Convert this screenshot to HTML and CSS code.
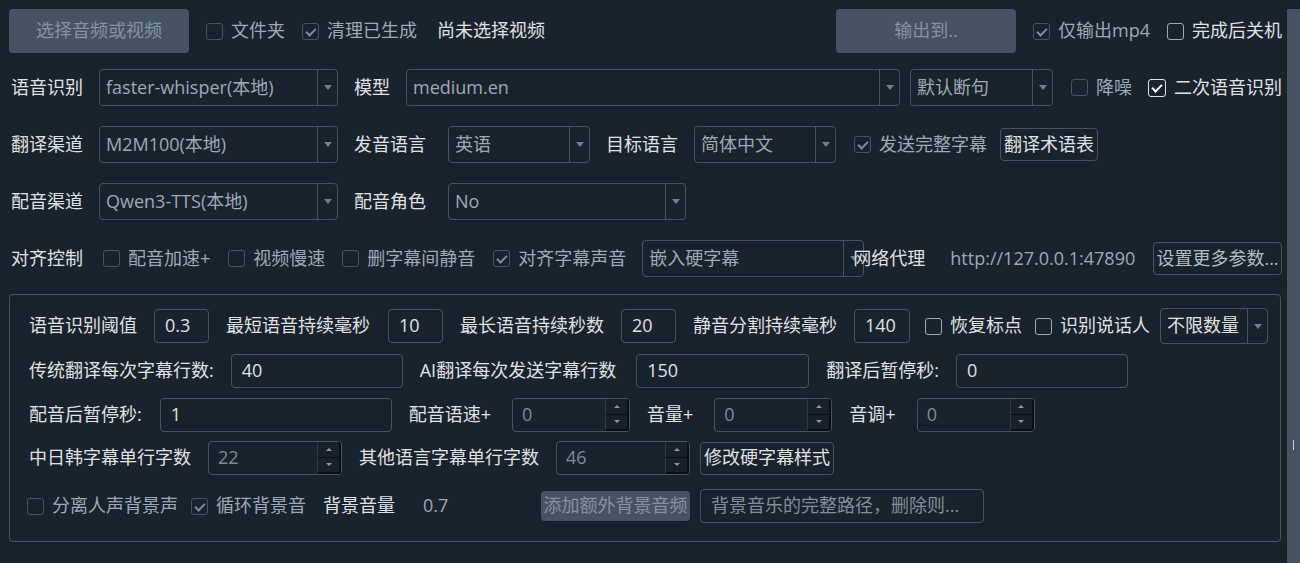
FILE: index.html
```html
<!DOCTYPE html>
<html lang="zh-CN">
<head>
    <meta charset="UTF-8">
    <title>视频翻译</title>
    <link rel="stylesheet" href="styles.css">
</head>
<body>
<div class="window">
    <div class="content">
        <div class="row row-top">
            <div class="btn btn-fill w-180">选择音频或视频</div>
            <label class="cb"><span class="box"></span>文件夹</label>
            <label class="cb"><span class="box checked"></span>清理已生成</label>
            <span class="lbl gap-20">尚未选择视频</span>
            <div class="btn btn-fill w-180 push">输出到..</div>
            <label class="cb"><span class="box checked"></span>仅输出mp4</label>
            <label class="cb on"><span class="box"></span>完成后关机</label>
        </div>

        <div class="row row-form first">
            <span class="lbl">语音识别</span>
            <div class="combo w-239"><span class="val">faster-whisper(本地)</span><span class="arrow"></span></div>
            <span class="lbl">模型</span>
            <div class="combo w-494"><span class="val">medium.en</span><span class="arrow"></span></div>
            <div class="combo w-143 gap-10"><span class="val">默认断句</span><span class="arrow"></span></div>
            <label class="cb gap-18"><span class="box"></span>降噪</label>
            <label class="cb on"><span class="box big checked"></span>二次语音识别</label>
        </div>

        <div class="row row-form">
            <span class="lbl">翻译渠道</span>
            <div class="combo w-239"><span class="val">M2M100(本地)</span><span class="arrow"></span></div>
            <span class="lbl">发音语言</span>
            <div class="combo w-142 gap-22"><span class="val">英语</span><span class="arrow"></span></div>
            <span class="lbl">目标语言</span>
            <div class="combo w-142"><span class="val">简体中文</span><span class="arrow"></span></div>
            <label class="cb gap-18"><span class="box checked"></span>发送完整字幕</label>
            <div class="btn btn-line w-98 gap-13">翻译术语表</div>
        </div>

        <div class="row row-form">
            <span class="lbl">配音渠道</span>
            <div class="combo w-239"><span class="val">Qwen3-TTS(本地)</span><span class="arrow"></span></div>
            <span class="lbl">配音角色</span>
            <div class="combo w-238 gap-22"><span class="val">No</span><span class="arrow"></span></div>
        </div>

        <div class="row row-form">
            <span class="lbl">对齐控制</span>
            <label class="cb gap-20"><span class="box"></span>配音加速+</label>
            <label class="cb gap-18"><span class="box"></span>视频慢速</label>
            <label class="cb gap-17"><span class="box"></span>删字幕间静音</label>
            <label class="cb gap-18"><span class="box checked"></span>对齐字幕声音</label>
            <div class="combo w-222 gap-14"><span class="val">嵌入硬字幕</span><span class="arrow"></span></div>
            <span class="lbl overlap">网络代理</span>
            <span class="muted gap-26">http://127.0.0.1:47890</span>
            <div class="btn btn-line btn-dim w-129 push">设置更多参数...</div>
        </div>

        <div class="group">
            <div class="row row-g1">
                <span class="lbl">语音识别阈值</span>
                <div class="field w-55">0.3</div>
                <span class="lbl">最短语音持续毫秒</span>
                <div class="field w-55 gap-18">10</div>
                <span class="lbl">最长语音持续秒数</span>
                <div class="field w-55">20</div>
                <span class="lbl">静音分割持续毫秒</span>
                <div class="field w-56">140</div>
                <label class="cb on gap-15"><span class="box"></span>恢复标点</label>
                <label class="cb on gap-13"><span class="box"></span>识别说话人</label>
                <div class="combo combo-sm w-108 gap-10"><span class="val bright">不限数量</span><span class="arrow"></span></div>
            </div>

            <div class="row row-g">
                <span class="lbl">传统翻译每次字幕行数:</span>
                <div class="field w-172">40</div>
                <span class="lbl">AI翻译每次发送字幕行数</span>
                <div class="field w-173 gap-20">150</div>
                <span class="lbl">翻译后暂停秒:</span>
                <div class="field w-172">0</div>
            </div>

            <div class="row row-g">
                <span class="lbl">配音后暂停秒:</span>
                <div class="field w-232 gap-18">1</div>
                <span class="lbl">配音语速+</span>
                <div class="spin w-118 gap-22"><span class="val">0</span><span class="steps"><i class="up"></i><i class="down"></i></span></div>
                <span class="lbl">音量+</span>
                <div class="spin w-118 gap-22"><span class="val">0</span><span class="steps"><i class="up"></i><i class="down"></i></span></div>
                <span class="lbl">音调+</span>
                <div class="spin w-118 gap-22"><span class="val">0</span><span class="steps"><i class="up"></i><i class="down"></i></span></div>
            </div>

            <div class="row row-g row-g4">
                <span class="lbl">中日韩字幕单行字数</span>
                <div class="spin w-134"><span class="val">22</span><span class="steps"><i class="up"></i><i class="down"></i></span></div>
                <span class="lbl">其他语言字幕单行字数</span>
                <div class="spin w-134"><span class="val">46</span><span class="steps"><i class="up"></i><i class="down"></i></span></div>
                <div class="btn btn-line w-134 gap-10">修改硬字幕样式</div>
            </div>

            <div class="row row-g row-g5">
                <label class="cb start"><span class="box"></span>分离人声背景声</label>
                <label class="cb gap-13"><span class="box checked"></span>循环背景音</label>
                <span class="lbl">背景音量</span>
                <span class="muted bg-volume">0.7</span>
                <div class="btn btn-fill btn-short w-149">添加额外背景音频</div>
                <div class="field placeholder w-284 gap-10">背景音乐的完整路径，删除则...</div>
            </div>
        </div>
    </div>
    <div class="scrollbar"><span class="grip"></span></div>
</div>
</body>
</html>
```

FILE: styles.css
```css
body {
    margin: 0;
    background-color: #19232d;
    color: #e0e1e3;
    font-family: "Open Sans", "Noto Sans CJK SC", sans-serif;
    font-size: 18px;
    line-height: 1.2;
}
.window {
    display: flex;
    width: 1300px;
    height: 563px;
    overflow: hidden;
}
.content {
    width: 1287px;
    padding: 9px 5px 0 9px;
    box-sizing: border-box;
}
.scrollbar {
    width: 13px;
    margin-top: 9px;
    background-color: #455364;
    display: flex;
    justify-content: center;
    padding-top: 431px;
    box-sizing: border-box;
}
.grip {
    width: 1px;
    height: 10px;
    background-color: #c8ced4;
}

/* rows: default spacing is 16px, the modifiers below set the others */
.row {
    display: flex;
    align-items: center;
    gap: 16px;
    white-space: nowrap;
}
.row-top {
    height: 44px;
    gap: 17px;
}
.row-form {
    height: 37px;
    margin-top: 20px;
}
.row-form.first {
    margin-top: 16px;
}
.row-form > .lbl:first-child {
    margin-left: 2px;
}
.group .row {
    gap: 17px;
}
.row-g1 {
    height: 36px;
}
.row-g {
    height: 34px;
    margin-top: 10px;
}
.row-g4 {
    margin-top: 9px;
}
.row-g5 {
    margin-top: 14px;
}

/* spacing tweaks, relative to the row gap */
.push { margin-left: auto; }
.row-form .gap-10 { margin-left: -6px; }
.group .gap-10 { margin-left: -7px; }
.gap-13 { margin-left: -3px; }
.group .gap-13 { margin-left: -4px; }
.gap-14 { margin-left: 0; }
.gap-15 { margin-left: -2px; }
.gap-17 { margin-left: 1px; }
.gap-18 { margin-left: 2px; }
.group .gap-18 { margin-left: 1px; }
.group .gap-20 { margin-left: 3px; }
.row-top .gap-20 { margin-left: 3px; }
.row-form .gap-20 { margin-left: 4px; }
.gap-22 { margin-left: 6px; }
.group .gap-22 { margin-left: 4px; }
.gap-26 { margin-left: 9px; }
.overlap { margin-left: -27px; }

/* widths */
.w-55 { width: 55px; }
.w-56 { width: 56px; }
.w-98 { width: 98px; }
.w-108 { width: 108px; }
.w-118 { width: 118px; }
.w-129 { width: 129px; }
.w-134 { width: 134px; }
.w-142 { width: 142px; }
.w-143 { width: 143px; }
.w-149 { width: 149px; }
.w-172 { width: 172px; }
.w-173 { width: 173px; }
.w-180 { width: 180px; }
.w-222 { width: 222px; }
.w-232 { width: 232px; }
.w-238 { width: 238px; }
.w-239 { width: 239px; }
.w-284 { width: 284px; }
.w-494 { width: 494px; }

.lbl {
    color: #e0e1e3;
    position: relative;
}
.muted {
    color: #9da9b5;
}
.bg-volume {
    width: 101px;
    margin-left: 11px;
}

/* buttons */
.btn {
    display: flex;
    align-items: center;
    justify-content: center;
    flex: none;
    border-radius: 4px;
    box-sizing: border-box;
    overflow: hidden;
}
.btn-fill {
    height: 44px;
    background-color: #455364;
    color: #8293a3;
}
.btn-short {
    height: 30px;
}
.btn-line {
    height: 33px;
    border: 1px solid #455364;
    color: #e0e1e3;
}
.btn-dim {
    color: #b3bcc5;
}

/* checkboxes */
.cb {
    display: flex;
    align-items: center;
    gap: 8px;
    color: #9da9b5;
}
.cb.on {
    color: #e0e1e3;
}
.cb.start {
    margin-left: -2px;
}
.box {
    position: relative;
    flex: none;
    width: 17px;
    height: 17px;
    border: 1px solid #455364;
    border-radius: 3px;
    box-sizing: border-box;
    color: #788d9c;
}
.box.big {
    width: 18px;
    height: 18px;
}
.cb.on .box {
    border-color: #9da9b5;
}
.cb.on .box.checked {
    border-color: #e0e1e3;
    color: #ffffff;
}
.box.checked::after {
    content: "";
    position: absolute;
    left: 5px;
    top: 2px;
    width: 4px;
    height: 8px;
    border: solid currentColor;
    border-width: 0 2px 2px 0;
    transform: rotate(45deg);
}

/* combos */
.combo {
    display: flex;
    flex: none;
    height: 37px;
    border: 1px solid #455364;
    border-radius: 4px;
    box-sizing: border-box;
}
.combo-sm {
    height: 36px;
}
.combo .val {
    flex: 1;
    display: flex;
    align-items: center;
    padding-left: 6px;
    color: #9da9b5;
    overflow: hidden;
}
.combo .val.bright {
    color: #e0e1e3;
}
.combo .arrow {
    width: 20px;
    border-left: 1px solid #455364;
    box-sizing: border-box;
    display: flex;
    align-items: center;
    justify-content: center;
}
.combo .arrow::after {
    content: "";
    border-top: 5px solid #6f7f8e;
    border-left: 4px solid transparent;
    border-right: 4px solid transparent;
}

/* line edits */
.field {
    display: flex;
    align-items: center;
    flex: none;
    height: 34px;
    padding-left: 10px;
    border: 1px solid #455364;
    border-radius: 4px;
    box-sizing: border-box;
    color: #e0e1e3;
}
.field.placeholder {
    color: #7f8e9c;
}

/* spin boxes */
.spin {
    display: flex;
    flex: none;
    height: 34px;
    border: 1px solid #455364;
    border-radius: 4px;
    box-sizing: border-box;
}
.spin .val {
    flex: 1;
    display: flex;
    align-items: center;
    padding-left: 9px;
    color: #788d9c;
}
.spin .steps {
    width: 24px;
    display: flex;
    flex-direction: column;
}
.spin .steps i {
    flex: 1;
    display: flex;
    align-items: center;
    justify-content: center;
    background-color: #18212a;
    border-right: 2px solid #0a0e12;
    border-bottom: 1px solid #0a0e12;
    border-left: 1px solid #2e3b48;
}
.spin .steps i.up {
    border-top-right-radius: 3px;
}
.spin .steps i.down {
    border-bottom: 2px solid #0a0e12;
    border-bottom-right-radius: 3px;
}
.spin .steps i.up::after {
    content: "";
    border-bottom: 3px solid #8796a4;
    border-left: 3px solid transparent;
    border-right: 3px solid transparent;
}
.spin .steps i.down::after {
    content: "";
    border-top: 3px solid #8796a4;
    border-left: 3px solid transparent;
    border-right: 3px solid transparent;
}

/* group box */
.group {
    width: 1272px;
    height: 248px;
    margin-top: 17px;
    padding: 13px 0 0 19px;
    border: 1px solid #455364;
    border-radius: 4px;
    box-sizing: border-box;
}
```
